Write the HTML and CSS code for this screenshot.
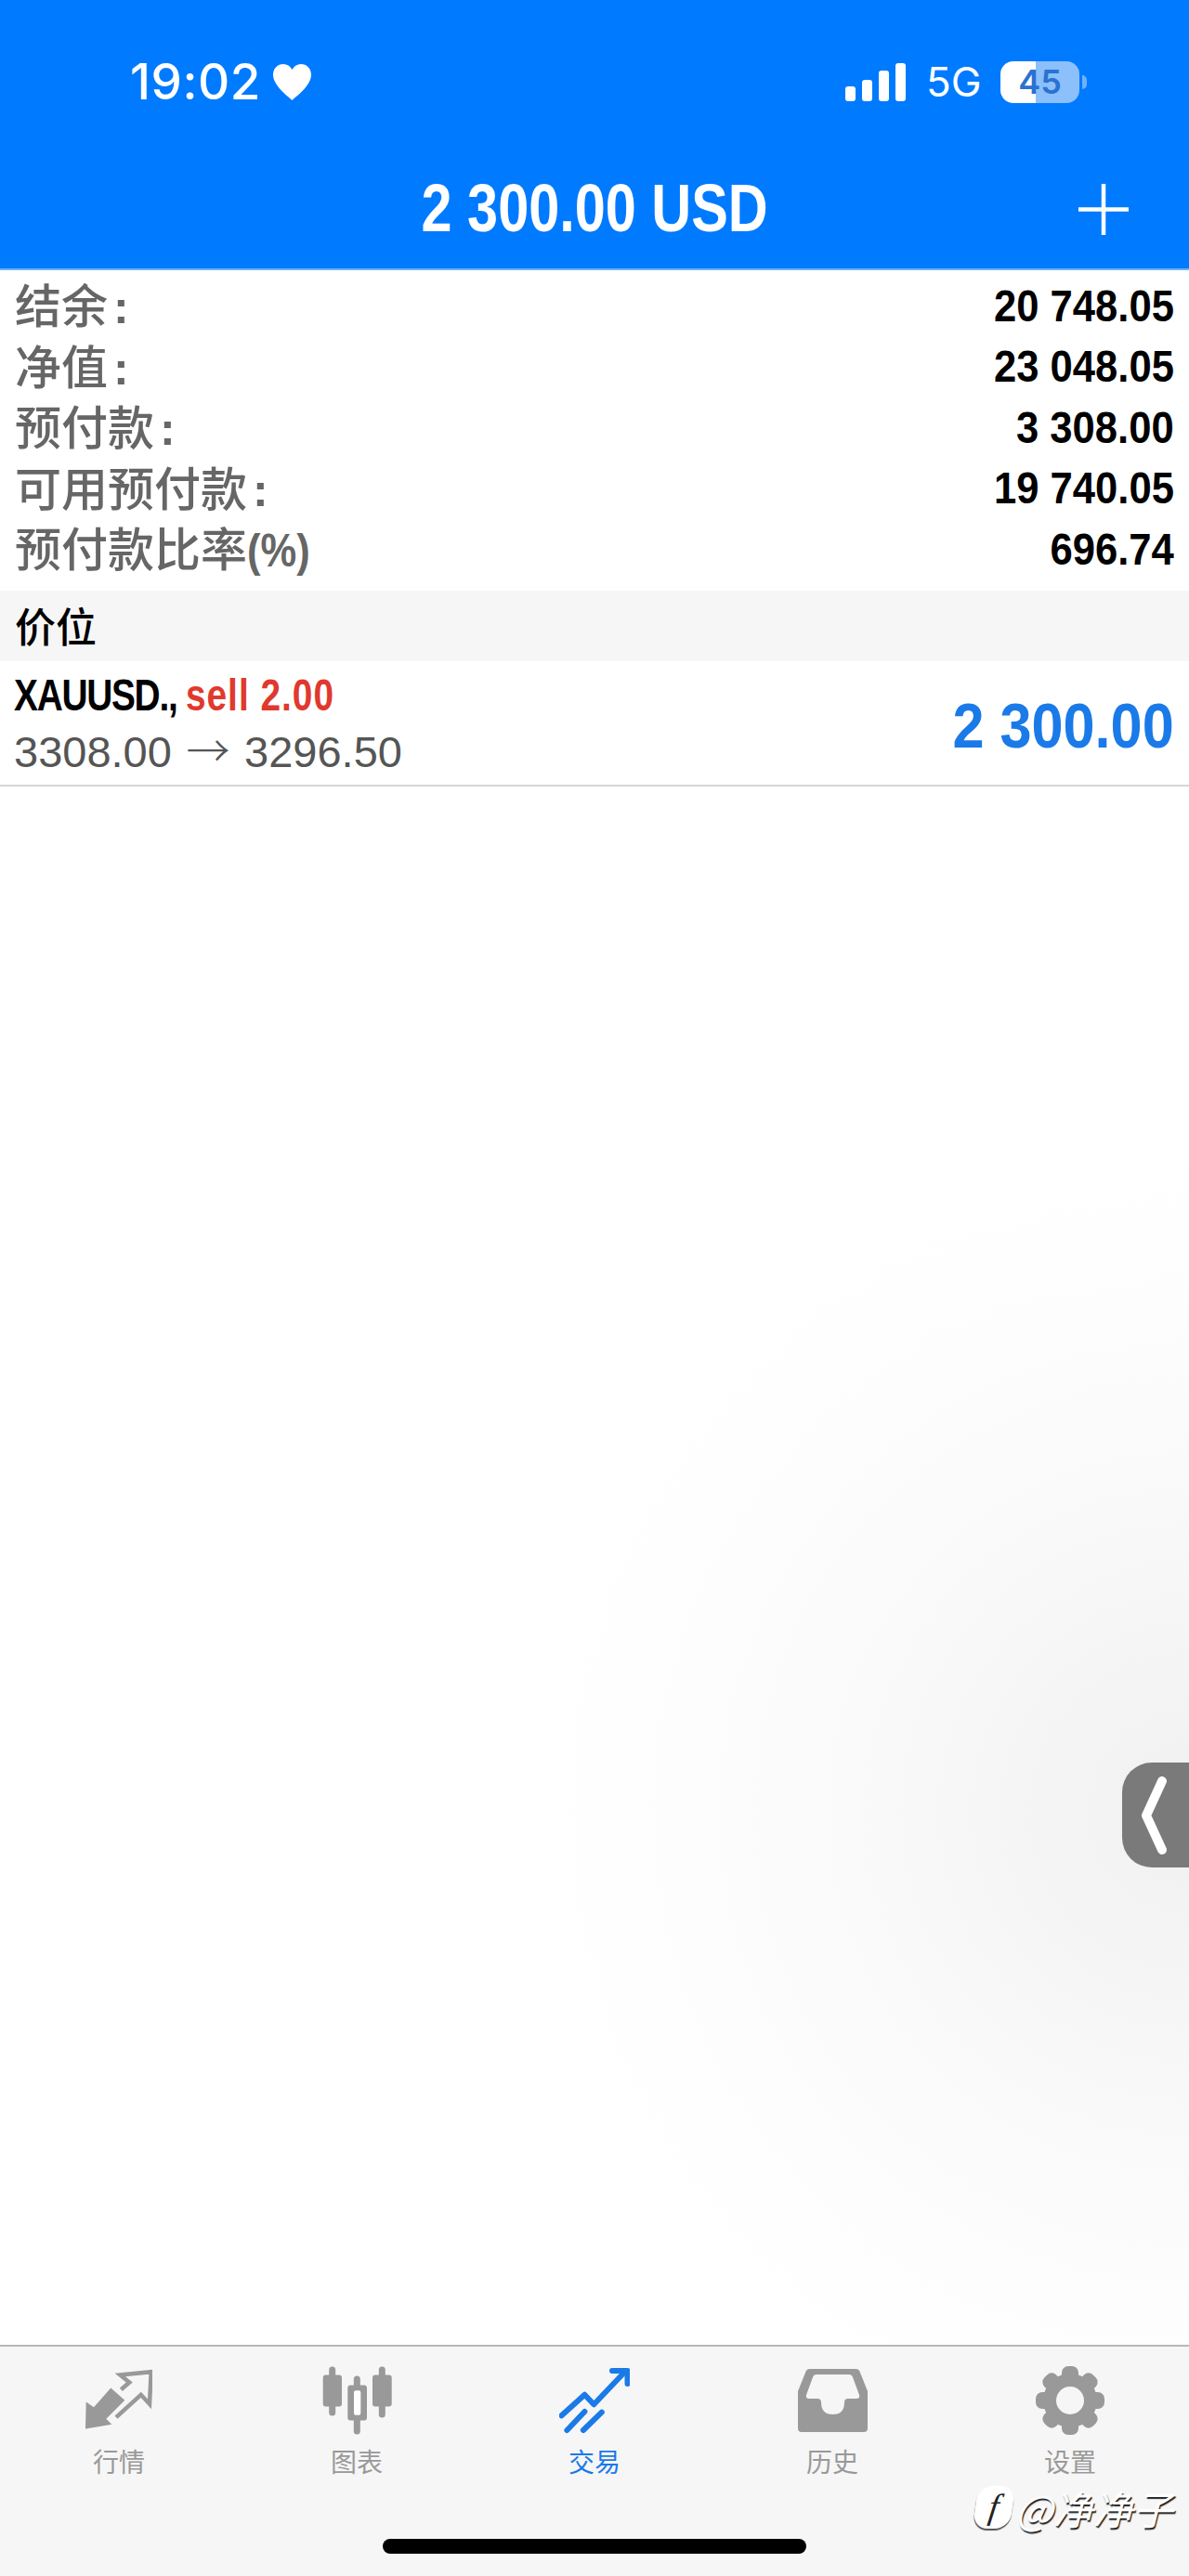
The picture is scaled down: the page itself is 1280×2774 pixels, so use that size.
FILE: index.html
```html
<!DOCTYPE html>
<html lang="zh-CN">
<head>
    <meta charset="UTF-8">
    <meta name="viewport" content="width=device-width, initial-scale=1.0">
    <title>交易</title>
    <link rel="stylesheet" href="styles.css">
</head>
<body>
    <header class="top">
        <div class="status-bar">
            <div class="status-left">
                <span class="clock">19:02</span>
                <svg class="heart" viewBox="0 0 41 39"><path d="M20.5 39C19 37 0 24 0 11.500C0 4.500 5 0 11 0C15 0 18.500 2 20.500 6C22.500 2 26 0 30 0C36 0 41 4.500 41 11.500C41 24 22 37 20.500 39Z" fill="#fff"/></svg>
            </div>
            <div class="status-right">
                <div class="signal">
                    <i class="bar bar1"></i>
                    <i class="bar bar2"></i>
                    <i class="bar bar3"></i>
                    <i class="bar bar4"></i>
                </div>
                <span class="network">5G</span>
                <div class="battery">
                    <div class="battery-body"><span>45</span></div>
                    <i class="battery-tip"></i>
                </div>
            </div>
        </div>
        <div class="nav-bar">
            <h1 class="profit-title">2 300.00 USD</h1>
            <svg class="plus" viewBox="0 0 54 55"><path d="M27 0V55M0 27.500H54" stroke="#fff" stroke-width="4.500"/></svg>
        </div>
    </header>

    <main class="content">
        <section class="summary">
            <div class="row"><span class="label">结余<b class="colon">:</b></span><span class="value">20 748.05</span></div>
            <div class="row"><span class="label">净值<b class="colon">:</b></span><span class="value">23 048.05</span></div>
            <div class="row"><span class="label">预付款<b class="colon">:</b></span><span class="value">3 308.00</span></div>
            <div class="row"><span class="label">可用预付款<b class="colon">:</b></span><span class="value">19 740.05</span></div>
            <div class="row"><span class="label">预付款比率<b class="pct">(%)</b></span><span class="value">696.74</span></div>
        </section>

        <div class="section-title">价位</div>

        <div class="position">
            <div class="position-info">
                <div class="position-name">XAUUSD., <span class="sell">sell 2.00</span></div>
                <div class="position-price">3308.00 <span class="arrow">→</span> 3296.50</div>
            </div>
            <div class="position-profit">2 300.00</div>
        </div>

        <!-- 侧边把手 -->
        <div class="side-handle">
            <svg viewBox="0 0 30 84"><path d="M23 5L6 42L23 79" fill="none" stroke="#fff" stroke-width="10" stroke-linecap="round" stroke-linejoin="round"/></svg>
        </div>
    </main>

    <nav class="tabs">
        <div class="tab">
            <svg class="tab-icon" width="72" height="63" viewBox="0 0 72 63">
                <path d="M0 62L.7 33L9 38.700L27.300 18L42.300 31.300L22.300 51.300L28.300 57.300Z" fill="#999"/>
                <path d="M38.300 19.700L47.300 12L37.300 4L70.700 .7L69 35.300L59.700 25.300L33 49.700" fill="none" stroke="#999" stroke-width="4.500"/>
            </svg>
            <span>行情</span>
        </div>
        <div class="tab">
            <svg class="tab-icon" width="75" height="73" viewBox="0 0 75 73">
                <rect x="7.200" y="0" width="7" height="53" rx="3.500" fill="#999"/>
                <rect x=".7" y="9" width="20.300" height="34" rx="3" fill="#999"/>
                <rect x="33.800" y="10" width="7" height="63" rx="3.500" fill="#999"/>
                <rect x="27.300" y="20" width="20.700" height="38" rx="3" fill="#999"/>
                <rect x="34" y="25.700" width="7.300" height="26.600" rx="2" fill="#fff"/>
                <rect x="60.800" y="0" width="7" height="55" rx="3.500" fill="#999"/>
                <rect x="54" y="9" width="20.700" height="34" rx="3" fill="#999"/>
            </svg>
            <span>图表</span>
        </div>
        <div class="tab active">
            <svg class="tab-icon" width="76" height="70" viewBox="0 0 76 70">
                <g fill="none" stroke="#1a7ae8" stroke-width="6" stroke-linecap="round" stroke-linejoin="round">
                    <path d="M2.500 51.300L27.400 28.700L37.300 39.300L69.600 5.300"/>
                    <path d="M57 3H73.500V17"/>
                    <path d="M8.400 67L27.400 47"/>
                    <path d="M25.900 67L45.800 47.700"/>
                </g>
            </svg>
            <span>交易</span>
        </div>
        <div class="tab">
            <svg class="tab-icon" width="75" height="68" viewBox="0 0 75 68">
                <path fill="#999" fill-rule="evenodd" d="M13 0H62Q66 0 67 4L75 24V64Q75 68 71 68H4Q0 68 0 64V24L8 4Q9 0 13 0ZM20 6Q17 6 16 9L9 28Q8 32 12 32H21Q25 32 25 36Q25 49 37.500 49Q50 49 50 36Q50 32 54 32H63Q67 32 66 28L59 9Q58 6 55 6Z"/>
            </svg>
            <span>历史</span>
        </div>
        <div class="tab">
            <svg class="tab-icon" width="76" height="74" viewBox="0 0 76 74">
                <circle cx="38" cy="37" r="29" fill="#999"/>
                <g fill="#999">
                    <rect x="29" y="0" width="18" height="74" rx="7"/>
                    <rect x="29" y="0" width="18" height="74" rx="7" transform="rotate(45 38 37)"/>
                    <rect x="29" y="0" width="18" height="74" rx="7" transform="rotate(90 38 37)"/>
                    <rect x="29" y="0" width="18" height="74" rx="7" transform="rotate(135 38 37)"/>
                </g>
                <circle cx="38" cy="37" r="15" fill="#f6f6f6"/>
            </svg>
            <span>设置</span>
        </div>
    </nav>

    <div class="home-indicator"></div>

    <!-- 水印 -->
    <div class="watermark">
        <span class="watermark-logo">f</span>
        <span class="watermark-name">@净净子</span>
    </div>
</body>
</html>
```

FILE: styles.css
```css
* {
    box-sizing: border-box;
}

body {
    display: flex;
    flex-direction: column;
    position: relative;
    width: 1280px;
    height: 2774px;
    margin: 0;
    overflow: hidden;
    background: #fff;
    font-family: "Liberation Sans", "Noto Sans CJK SC", sans-serif;
}

.top {
    height: 291px;
    background: #007aff;
    border-bottom: 2px solid #6fb0fb;
    color: #fff;
}

.status-bar {
    display: flex;
    justify-content: space-between;
    align-items: center;
    height: 60px;
    margin-top: 58px;
    padding: 0 110px 0 140px;
}

.status-left {
    display: flex;
    align-items: center;
    gap: 13px;
}

.clock {
    font-family: Inter, sans-serif;
    font-size: 53px;
    font-weight: 500;
    letter-spacing: .5px;
}

.heart {
    width: 41px;
    height: 39px;
}

.status-right {
    display: flex;
    align-items: center;
}

.signal {
    display: flex;
    align-items: flex-end;
    gap: 7px;
    height: 41px;
}

.bar {
    display: block;
    width: 11px;
    background: #fff;
    border-radius: 3px;
}

.bar1 { height: 16px; }
.bar2 { height: 23px; }
.bar3 { height: 33px; }
.bar4 { height: 41px; }

.network {
    width: 57px;
    margin-left: 22px;
    font-family: Inter, sans-serif;
    font-size: 44px;
    line-height: 41px;
}

.battery {
    display: flex;
    align-items: center;
    margin-left: 23px;
}

.battery-body {
    width: 85px;
    height: 45px;
    border-radius: 14px;
    background: linear-gradient(to right, #fff 0, #fff 38px, #8cc0fb 38px);
    color: #2a72d0;
    font-family: Inter, sans-serif;
    font-size: 36px;
    font-weight: 600;
    line-height: 45px;
    text-align: center;
}

.battery-tip {
    display: block;
    width: 5px;
    height: 15px;
    margin-left: 3px;
    background: #6fb0fb;
    border-radius: 0 5px 5px 0;
}

.nav-bar {
    position: relative;
    display: flex;
    justify-content: center;
    margin-top: 60px;
}

/* 没有窄体字库, 用 scaleX 压窄 */
.profit-title {
    margin: 0;
    font-size: 72px;
    font-weight: 700;
    line-height: 92px;
    transform: scaleX(.825);
}

.plus {
    position: absolute;
    top: 20px;
    left: 1161px;
    width: 54px;
    height: 55px;
}

.content {
    position: relative;
    flex: 1;
    background: radial-gradient(circle at 1280px 1660px, #f0f0f0 0, #f7f7f7 250px, #fdfdfd 520px, #fff 720px);
}

.summary {
    padding: 5px 16px 12px;
    background: #fff;
}

.row {
    display: flex;
    justify-content: space-between;
    align-items: center;
    height: 65.5px;
}

.label {
    color: #666;
    font-family: "Noto Sans CJK SC", sans-serif;
    font-size: 50px;
    font-weight: 500;
    line-height: 60px;
}

.colon {
    margin-left: 6px;
    font-family: "Liberation Sans", sans-serif;
    font-weight: 700;
}

.pct {
    display: inline-block;
    font-family: "Liberation Sans", sans-serif;
    font-weight: 700;
    transform: scaleX(.87);
    transform-origin: left center;
}

.value {
    display: inline-block;
    color: #000;
    font-size: 49px;
    font-weight: 700;
    transform: scaleX(.89);
    transform-origin: right center;
}

.section-title {
    height: 76px;
    padding-left: 16px;
    background: #f6f6f6;
    color: #000;
    font-family: "Noto Sans CJK SC", sans-serif;
    font-size: 44px;
    font-weight: 500;
    line-height: 75px;
}

.position {
    display: flex;
    justify-content: space-between;
    align-items: center;
    height: 135px;
    padding: 6px 16px 0 15px;
    background: #fff;
    border-bottom: 2px solid #d6d6d6;
}

.position-name {
    color: #000;
    font-size: 48px;
    font-weight: 700;
    letter-spacing: -1.6px;
    line-height: 52px;
    transform: scaleX(.81);
    transform-origin: left center;
}

.sell {
    color: #e0392e;
    letter-spacing: 1.2px;
}

.position-price {
    color: #555;
    font-size: 47px;
    line-height: 61px;
    word-spacing: 2.5px;
}

.arrow {
    font-family: "Noto Sans CJK SC", sans-serif;
    font-weight: 300;
}

.position-profit {
    display: inline-block;
    color: #1a7ae8;
    font-size: 68px;
    font-weight: 700;
    transform: scaleX(.9);
    transform-origin: right center;
}

.side-handle {
    position: absolute;
    top: 1607px;
    right: 0;
    display: flex;
    align-items: center;
    width: 72px;
    height: 113px;
    padding-left: 20px;
    background: #7a7a7a;
    border-radius: 32px 0 0 32px;
}

.side-handle svg {
    width: 30px;
    height: 84px;
}

.tabs {
    display: flex;
    height: 249px;
    padding-top: 21px;
    background: #f6f6f6;
    border-top: 2px solid #b8b8b8;
}

.tab {
    display: flex;
    flex: 1;
    flex-direction: column;
    align-items: center;
    color: #999;
    font-family: "Noto Sans CJK SC", sans-serif;
    font-size: 28px;
}

.tab-icon {
    height: 74px;
    margin-bottom: 8px;
}

.tab.active {
    color: #1a7ae8;
}

.home-indicator {
    position: absolute;
    left: 412px;
    bottom: 24px;
    width: 456px;
    height: 16px;
    background: #000;
    border-radius: 8px;
}

.watermark {
    position: absolute;
    top: 2676px;
    left: 1050px;
    display: flex;
    align-items: center;
    gap: 3px;
    height: 48px;
}

.watermark-logo {
    width: 40px;
    height: 46px;
    background: #fff;
    border-radius: 16px;
    box-shadow: 0 2px 1px #555;
    color: #222;
    font-family: "Liberation Serif", serif;
    font-size: 38px;
    font-style: italic;
    line-height: 44px;
    text-align: center;
    transform: skewX(-8deg);
}

.watermark-name {
    color: #fff;
    font-family: "Noto Sans CJK SC", sans-serif;
    font-size: 43px;
    font-style: italic;
    line-height: 48px;
    text-shadow: 1px 2px 1px #222;
}
```
